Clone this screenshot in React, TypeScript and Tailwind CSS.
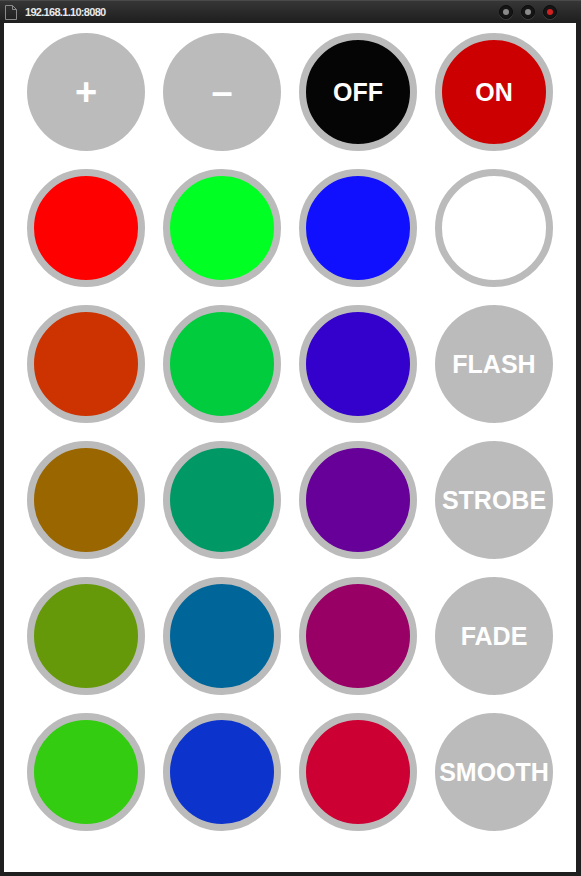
import React from "react";

type Btn = {
  label?: string;
  color?: string;
  big?: boolean;
};

const rows: Btn[][] = [
  [{ label: "+", big: true }, { label: "–", big: true }, { label: "OFF", color: "bg-[#050505]" }, { label: "ON", color: "bg-[#cc0000]" }],
  [{ color: "bg-[#ff0000]" }, { color: "bg-[#00ff22]" }, { color: "bg-[#1010ff]" }, { color: "bg-white" }],
  [{ color: "bg-[#cc3300]" }, { color: "bg-[#00cc3e]" }, { color: "bg-[#3300cc]" }, { label: "FLASH" }],
  [{ color: "bg-[#996600]" }, { color: "bg-[#009966]" }, { color: "bg-[#660099]" }, { label: "STROBE" }],
  [{ color: "bg-[#66990a]" }, { color: "bg-[#006699]" }, { color: "bg-[#990066]" }, { label: "FADE" }],
  [{ color: "bg-[#33cc11]" }, { color: "bg-[#0c33cc]" }, { color: "bg-[#cc0033]" }, { label: "SMOOTH" }],
];

const RemoteButton = ({ btn }: { btn: Btn }) => {
  const ring = btn.color ? `${btn.color} border-[7px] border-[#bbbbbb]` : "bg-[#bbbbbb]";
  return (
    <div
      className={`w-[118px] h-[118px] rounded-full flex items-center justify-center text-white font-bold whitespace-nowrap ${ring}`}
    >
      {btn.label && (
        <span className={btn.big ? "text-[38px] leading-none" : "text-[25px] leading-none"}>
          {btn.label}
        </span>
      )}
    </div>
  );
};

const WinDot = ({ red }: { red?: boolean }) => (
  <div className="w-[14px] h-[14px] rounded-full bg-[#151515] border border-[#0c0c0c] flex items-center justify-center shadow-[0_1px_0_#3a3a3a]">
    <div className={`w-[6px] h-[6px] rounded-full ${red ? "bg-[#d42020]" : "bg-[#8a8a8a]"}`} />
  </div>
);

export default function App() {
  return (
    <div
      className="w-[581px] h-[876px] bg-[#1f1f1f] flex flex-col"
      style={{ fontFamily: '"Liberation Sans", Arial, sans-serif' }}
    >
      {/* title bar */}
      <div className="h-[23px] flex items-center bg-gradient-to-b from-[#363636] to-[#1e1e1e] border-t border-[#4a4a4a]">
        <svg width="12" height="15" viewBox="0 0 12 15" className="ml-[5px]">
          <path d="M0.5 0.5h7l4 4v10h-11z M7.5 0.5v4h4" fill="none" stroke="#8a8a8a" strokeWidth="1" />
        </svg>
        <span className="ml-[8px] text-[11px] font-bold tracking-[-0.7px] text-[#e8e8e8]">
          192.168.1.10:8080
        </span>
        <div className="ml-auto mr-[24px] flex gap-[8px]">
          <WinDot />
          <WinDot />
          <WinDot red />
        </div>
      </div>

      {/* page */}
      <div className="flex-1 ml-[4px] mr-[5px] mb-[4px] bg-white pl-[23px] pt-[10px]">
        <div className="grid grid-cols-[repeat(4,118px)] gap-[18px]">
          {rows.flat().map((btn, i) => (
            <RemoteButton key={i} btn={btn} />
          ))}
        </div>
      </div>
    </div>
  );
}
